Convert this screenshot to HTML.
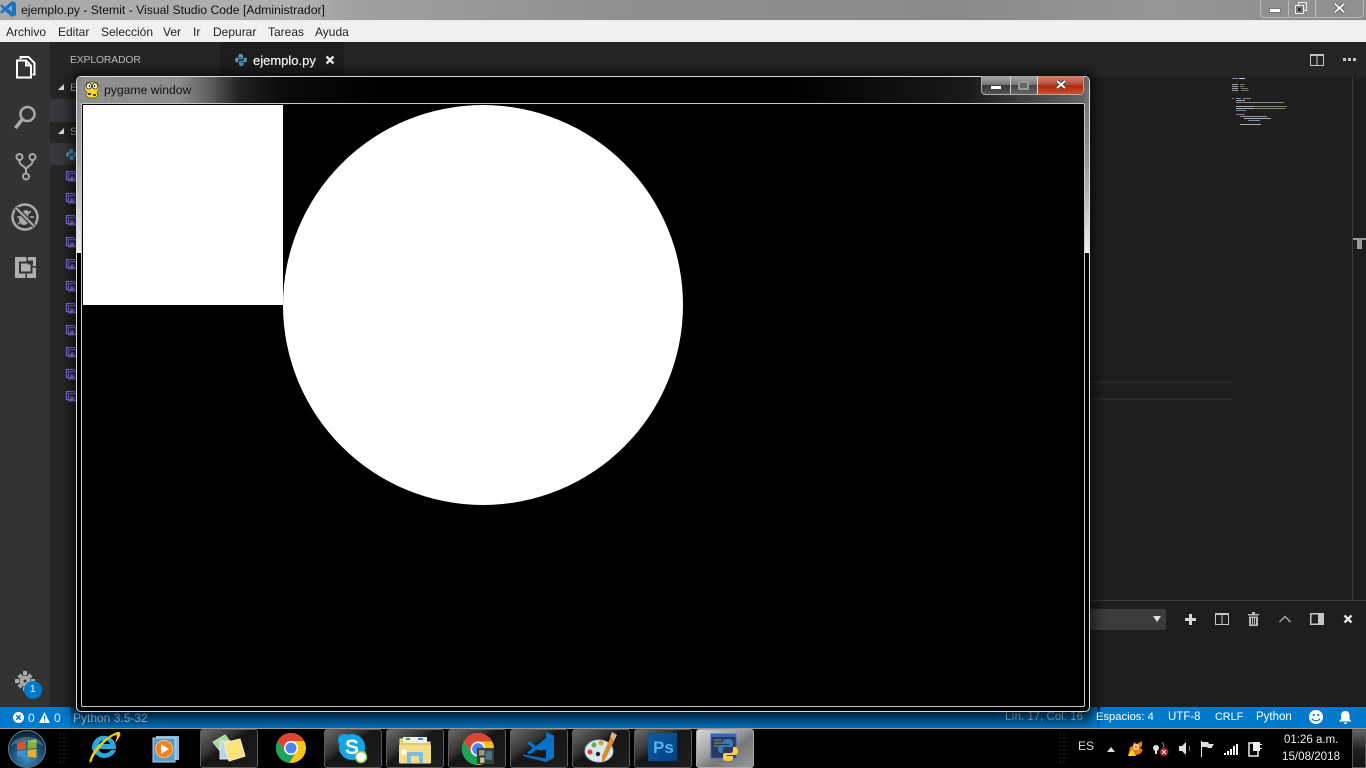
<!DOCTYPE html>
<html>
<head>
<meta charset="utf-8">
<style>
html,body{margin:0;padding:0;width:1366px;height:768px;overflow:hidden;background:#000;}
body{position:relative;font-family:"Liberation Sans",sans-serif;font-size:12px;}
.a{position:absolute;}
.t{position:absolute;white-space:nowrap;line-height:1;}
svg{position:absolute;overflow:visible;}
.btn{position:absolute;top:729px;width:56px;height:37px;border:1px solid #5a5a5a;border-radius:3px;background:linear-gradient(145deg,#6a6a6a 0%,#333 35%,#161616 45%,#1d1d1d 100%);}
.m{position:absolute;height:1px;}
.s{font-size:11.5px;top:712px;color:#fff;}
</style>
</head>
<body>
<!-- OS title bar -->
<div class="a" style="left:0;top:0;width:1366px;height:20px;background:linear-gradient(90deg,#a8a8a8 0,#b0b0b0 22%,#a0a0a0 26%,#8f8f8f 45%,#8a8a8a 70%,#969696 85%,#8a8a8a 100%);"></div>
<div class="a" style="left:0;top:20px;width:1366px;height:1px;background:#e8e8e8;"></div>
<svg style="left:0;top:0" width="18" height="18" viewBox="0 0 18 18"><path d="M12 1l4 2v12l-4 2-7-6-3 2.500-2-1 3-3.500-3-3.500 2-1 3 2.500zM12 5.500L8 8.500l4 3z" fill="#1b74c4"/></svg>
<div class="t" style="left:21px;top:4px;font-size:12.2px;color:#111;">ejemplo.py - Stemit - Visual Studio Code [Administrador]</div>
<!-- window buttons -->
<div class="a" style="left:1260px;top:0;width:102px;height:17px;border:1px solid #b8b8b8;border-top:none;border-radius:0 0 4px 4px;background:#909090;"></div>
<div class="a" style="left:1288px;top:0;width:1px;height:17px;background:#bbb;"></div>
<div class="a" style="left:1315px;top:0;width:1px;height:17px;background:#bbb;"></div>
<div class="a" style="left:1269px;top:8px;width:12px;height:5px;background:#fff;border:1px solid #777;box-sizing:border-box;"></div>
<svg style="left:1295px;top:2px" width="12" height="12"><rect x="3.500" y=".5" width="8" height="8" fill="none" stroke="#eee"/><rect x=".5" y="3.500" width="8" height="8" fill="#777" stroke="#eee"/><rect x="3" y="6" width="3" height="3" fill="#333"/></svg>
<svg style="left:1334px;top:3px" width="11" height="10"><path d="M1 1l9 8M10 1L1 9" stroke="#444" stroke-width="3.500"/><path d="M1 1l9 8M10 1L1 9" stroke="#fff" stroke-width="2"/></svg>
<!-- menu -->
<div class="a" style="left:0;top:21px;width:1366px;height:21px;background:#f0f0f0;"></div>
<div class="t" style="left:6px;top:26px;color:#222;">Archivo</div>
<div class="t" style="left:58px;top:26px;color:#222;">Editar</div>
<div class="t" style="left:101px;top:26px;color:#222;">Selección</div>
<div class="t" style="left:163px;top:26px;color:#222;">Ver</div>
<div class="t" style="left:193px;top:26px;color:#222;">Ir</div>
<div class="t" style="left:213px;top:26px;color:#222;">Depurar</div>
<div class="t" style="left:268px;top:26px;color:#222;">Tareas</div>
<div class="t" style="left:315px;top:26px;color:#222;">Ayuda</div>
<!-- VS code areas -->
<div class="a" style="left:0;top:42px;width:50px;height:665px;background:#333;"></div>
<div class="a" style="left:50px;top:42px;width:170px;height:665px;background:#252526;"></div>
<div class="a" style="left:220px;top:42px;width:1146px;height:35px;background:#252526;"></div>
<div class="a" style="left:220px;top:42px;width:124px;height:35px;background:#1e1e1e;"></div>
<div class="a" style="left:220px;top:77px;width:1146px;height:630px;background:#1e1e1e;"></div>
<div class="t" style="left:70px;top:56px;font-size:10.4px;letter-spacing:-.15px;color:#bbb;">EXPLORADOR</div>
<!-- tab -->
<svg style="left:235px;top:54px" width="12" height="12" viewBox="0 0 12 12"><path d="M6 0C3.500 0 3.500 1 3.500 2v1H6.500v.6H2C.8 3.600 0 4.500 0 6s.8 2.500 2 2.500h1V7c0-1 .8-1.800 1.800-1.800h2.700C7.500 5.200 8 4.700 8 4V2C8 .7 7 0 6 0z" fill="#519aba"/><path d="M6 12c2.500 0 2.500-1 2.500-2V9H5.500v-.6H10c1.200 0 2-.9 2-2.400s-.8-2.500-2-2.500H9V5c0 1-.8 1.800-1.800 1.800H4.500C4.500 6.800 4 7.300 4 8v2c0 1.300 1 2 2 2z" fill="#519aba"/></svg>
<div class="t" style="left:253px;top:54px;font-size:13px;color:#fff;text-shadow:0 0 .5px #fff;">ejemplo.py</div>
<svg style="left:326px;top:56px" width="8" height="8"><path d="M.5 .5l7 7M7.500 .5l-7 7" stroke="#e8e8e8" stroke-width="2.300"/></svg>
<!-- editor top-right -->
<svg style="left:1310px;top:54px" width="14" height="12"><rect x=".5" y=".5" width="13" height="11" fill="none" stroke="#c5c5c5"/><rect x="0" y="0" width="14" height="2" fill="#c5c5c5"/><rect x="6.500" y="0" width="1" height="12" fill="#c5c5c5"/></svg>
<div class="a" style="left:1343px;top:58px;width:3px;height:3px;background:#c5c5c5;"></div>
<div class="a" style="left:1348px;top:58px;width:3px;height:3px;background:#c5c5c5;"></div>
<div class="a" style="left:1353px;top:58px;width:3px;height:3px;background:#c5c5c5;"></div>
<!-- activity icons -->
<svg style="left:14px;top:54px" width="24" height="24" viewBox="0 0 24 24" fill="none" stroke="#fff" stroke-width="2"><path d="M6.500 5V3h8l6 6v11.500h-2"/><path d="M3 6.500h9l5 5v12H3z" fill="#333"/><path d="M12 6.500v5h5"/></svg>
<svg style="left:12px;top:104px" width="26" height="26" viewBox="0 0 26 26" fill="none" stroke="#a9a9a9"><circle cx="15.500" cy="10" r="7" stroke-width="2.500"/><path d="M10.500 15L3.500 24" stroke-width="3.500"/></svg>
<svg style="left:15px;top:153px" width="22" height="28" viewBox="0 0 22 28" fill="none" stroke="#a9a9a9" stroke-width="2"><circle cx="4.500" cy="4" r="3"/><circle cx="17.500" cy="4" r="3"/><circle cx="11" cy="23.500" r="3"/><path d="M4.500 7v2c0 3 6.500 5 6.500 7.500V20M17.500 7v2c0 3-6.500 5-6.500 7.500"/></svg>
<svg style="left:11px;top:203px" width="28" height="28" viewBox="0 0 28 28" fill="none" stroke="#a9a9a9"><circle cx="14" cy="14" r="12.500" stroke-width="2.500"/><ellipse cx="13" cy="16" rx="5" ry="6" fill="#a9a9a9" stroke="none"/><circle cx="15" cy="10" r="3" fill="#a9a9a9" stroke="none"/><path d="M9 8l3 3M20 8l-3 3M6 14h3M7 21l3-2M20 21l-2-2M23 14h-4" stroke-width="1.500"/><path d="M5 5l18 18" stroke="#333" stroke-width="4.500"/><path d="M5 5l18 18" stroke-width="2.200"/></svg>
<svg style="left:15px;top:257px" width="21" height="21" viewBox="0 0 21 21"><rect width="21" height="21" fill="#b0b0b0"/><rect x="5" y="5.500" width="11.500" height="10" fill="#b0b0b0" stroke="#333" stroke-width="2"/><rect x="11.500" y="0" width="1.500" height="5" fill="#333"/><rect x="17" y="9" width="4" height="1.500" fill="#333"/><rect x="10.500" y="16" width="1.500" height="5" fill="#333"/><rect x="0" y="17" width="10" height="0" fill="#333"/><rect x="13" y="3.500" width="5" height="4" fill="#333"/></svg>
<svg style="left:15px;top:671px" width="20" height="20" viewBox="0 0 20 20"><path d="M10 6.500a3.500 3.500 0 1 0 0 7 3.500 3.500 0 0 0 0-7z" fill="none" stroke="#a9a9a9" stroke-width="4"/><path d="M8 0h4v4H8zM8 16h4v4H8zM0 8h4v4H0zM16 8h4v4h-4zM2.500 5.500l3-3 2 2-3 3zM14.500 17.500l3-3-2-2-3 3zM2.500 14.500l3 3 2-2-3-3zM14.500 2.500l3 3-2 2-3-3z" fill="#a9a9a9"/></svg>
<div class="a" style="left:24px;top:681px;width:18px;height:18px;border-radius:50%;background:#007acc;"></div>
<div class="t" style="left:30px;top:685px;font-size:10px;color:#fff;">1</div>
<!-- sidebar -->
<div class="a" style="left:50px;top:99px;width:170px;height:23px;background:#37373d;"></div>
<div class="a" style="left:50px;top:143px;width:170px;height:22px;background:#37373d;"></div>
<svg style="left:58px;top:84px" width="6" height="6"><path d="M6 0v6H0z" fill="#ddd"/></svg>
<svg style="left:58px;top:128px" width="6" height="6"><path d="M6 0v6H0z" fill="#ddd"/></svg>
<div class="t" style="left:70px;top:83px;font-size:11px;color:#bbb;">E</div>
<div class="t" style="left:70px;top:127px;font-size:11px;color:#bbb;">S</div>
<svg style="left:66px;top:149px" width="11" height="11" viewBox="0 0 12 12"><path d="M6 0C3.500 0 3.500 1 3.500 2v1H6.500v.6H2C.8 3.600 0 4.500 0 6s.8 2.500 2 2.500h1V7c0-1 .8-1.800 1.800-1.800h2.700C7.500 5.200 8 4.700 8 4V2C8 .7 7 0 6 0z" fill="#4e9cc0"/><path d="M6 12c2.500 0 2.500-1 2.500-2V9H5.500v-.6H10c1.200 0 2-.9 2-2.400s-.8-2.500-2-2.500H9V5c0 1-.8 1.800-1.800 1.800H4.500C4.500 6.800 4 7.300 4 8v2c0 1.300 1 2 2 2z" fill="#4e9cc0"/></svg>
<svg style="left:65px;top:171px" width="11" height="236">
<defs><g id="im"><rect x="1.500" y=".5" width="8" height="8" fill="none" stroke="#8478e0" stroke-width="1.200"/><rect x="3.500" y="2.500" width="7.500" height="7.500" fill="#39365c" stroke="#8478e0" stroke-width=".8"/><path d="M3.500 10l3.500-5 4 5z" fill="#a878e8"/></g></defs>
<use href="#im" y="0"/><use href="#im" y="22"/><use href="#im" y="44"/><use href="#im" y="66"/><use href="#im" y="88"/><use href="#im" y="110"/><use href="#im" y="132"/><use href="#im" y="154"/><use href="#im" y="176"/><use href="#im" y="198"/><use href="#im" y="220"/>
</svg>
<!-- editor right details: minimap -->
<div class="m" style="left:1232px;top:78px;width:6px;background:#a070b0;"></div>
<div class="m" style="left:1239px;top:78px;width:6px;background:#ccc;"></div>
<div class="m" style="left:1232px;top:84px;width:6px;background:#999;"></div>
<div class="m" style="left:1240px;top:84px;width:5px;background:#6a7a5c;"></div>
<div class="m" style="left:1232px;top:86px;width:6px;background:#999;"></div>
<div class="m" style="left:1240px;top:86px;width:4px;background:#6a7a5c;"></div>
<div class="m" style="left:1232px;top:88px;width:6px;background:#999;"></div>
<div class="m" style="left:1241px;top:88px;width:7px;background:#6a7a5c;"></div>
<div class="m" style="left:1232px;top:90px;width:6px;background:#999;"></div>
<div class="m" style="left:1241px;top:90px;width:8px;background:#6a7a5c;"></div>
<div class="m" style="left:1232px;top:98px;width:2px;background:#a070b0;"></div>
<div class="m" style="left:1236px;top:98px;width:5px;background:#5a9ac0;"></div>
<div class="m" style="left:1243px;top:98px;width:8px;background:#a07860;"></div>
<div class="m" style="left:1236px;top:100px;width:9px;background:#aaa;"></div>
<div class="m" style="left:1236px;top:102px;width:48px;background:#888;"></div>
<div class="m" style="left:1236px;top:106px;width:18px;background:#aaa;"></div>
<div class="m" style="left:1254px;top:106px;width:33px;background:#7c8a70;"></div>
<div class="m" style="left:1236px;top:108px;width:18px;background:#aaa;"></div>
<div class="m" style="left:1254px;top:108px;width:31px;background:#7c8a70;"></div>
<div class="m" style="left:1236px;top:110px;width:10px;background:#6a8ab0;"></div>
<div class="m" style="left:1236px;top:114px;width:9px;background:#a070b0;"></div>
<div class="m" style="left:1240px;top:116px;width:27px;background:#999;"></div>
<div class="m" style="left:1244px;top:118px;width:27px;background:#aaa;"></div>
<div class="m" style="left:1248px;top:120px;width:12px;background:#6a8ab0;"></div>
<div class="m" style="left:1240px;top:124px;width:21px;background:#aaa;"></div>
<div class="a" style="left:1352px;top:77px;width:1px;height:523px;background:#3c3c3c;"></div>
<div class="a" style="left:1353px;top:238px;width:13px;height:2px;background:#999;"></div>
<div class="a" style="left:1357px;top:240px;width:5px;height:9px;background:#999;"></div>
<div class="a" style="left:1090px;top:381px;width:142px;height:2px;background:#2a2a2a;"></div>
<div class="a" style="left:1090px;top:398px;width:142px;height:2px;background:#2a2a2a;"></div>
<!-- panel -->
<div class="a" style="left:1090px;top:600px;width:276px;height:1px;background:#3c3c3c;"></div>
<div class="a" style="left:1090px;top:609px;width:76px;height:21px;background:#3c3c3c;"></div>
<svg style="left:1153px;top:616px" width="8" height="6"><path d="M0 0h8L4 6z" fill="#e0e0e0"/></svg>
<svg style="left:1185px;top:614px" width="11" height="11"><path d="M4 0h3v4h4v3H7v4H4V7H0V4h4z" fill="#d7d7d7"/></svg>
<svg style="left:1215px;top:613px" width="14" height="12"><rect x=".5" y=".5" width="13" height="11" fill="none" stroke="#c5c5c5"/><rect x="0" y="0" width="14" height="2" fill="#c5c5c5"/><rect x="6.500" y="0" width="1" height="12" fill="#c5c5c5"/></svg>
<svg style="left:1248px;top:612px" width="11" height="14"><path d="M0 2h11v1.500H0zM4 0h3v2H4zM1 4.500h9V14H1z" fill="#b8b8b8"/><path d="M3.500 6v6.500M5.500 6v6.500M7.500 6v6.500" stroke="#252526"/></svg>
<svg style="left:1279px;top:615px" width="12" height="8" fill="none"><path d="M.5 7L6 1.500 11.500 7" stroke="#a8a8a8" stroke-width="1.500"/></svg>
<svg style="left:1310px;top:613px" width="14" height="12"><rect x=".75" y=".75" width="12.500" height="10.500" fill="none" stroke="#c5c5c5" stroke-width="1.500"/><rect x="8" y="0" width="6" height="12" fill="#c5c5c5"/></svg>
<svg style="left:1344px;top:615px" width="8" height="8"><path d="M.5 .5l7 7M7.500 .5l-7 7" stroke="#e8e8e8" stroke-width="2.300"/></svg>
<!-- status bar -->
<div class="a" style="left:0;top:707px;width:1366px;height:21px;background:#007acc;"></div>
<div class="a" style="left:70px;top:707px;width:1030px;height:21px;background:linear-gradient(180deg,#002a4a 0%,#004a80 35%,#006fb8 100%);"></div>
<div class="a" style="left:60px;top:707px;width:20px;height:21px;background:linear-gradient(90deg,rgba(0,122,204,1),rgba(0,122,204,0));"></div>
<div class="a" style="left:1085px;top:707px;width:12px;height:21px;background:linear-gradient(90deg,rgba(0,122,204,0),rgba(0,122,204,1));"></div>
<svg style="left:13px;top:712px" width="11" height="11"><circle cx="5.500" cy="5.500" r="5.500" fill="#fff"/><path d="M3.300 3.300l4.400 4.400M7.700 3.300L3.300 7.700" stroke="#007acc" stroke-width="1.500"/></svg>
<div class="t" style="left:28px;top:712px;color:#e8f2fa;">0</div>
<svg style="left:39px;top:712px" width="11" height="11"><path d="M5.500 0L11 11H0z" fill="#fff"/><rect x="5" y="3.500" width="1.200" height="4" fill="#007acc"/><rect x="5" y="8.500" width="1.200" height="1.200" fill="#007acc"/></svg>
<div class="t" style="left:54px;top:712px;color:#e8f2fa;">0</div>
<div class="t" style="left:73px;top:712px;color:#a8c4d8;">Python 3.5-32</div>
<div class="t s" style="left:1005px;color:#8cb4d0;">Lín. 17, Col. 16</div>
<div class="t s" style="left:1096px;font-size:11.2px;">Espacios: 4</div>
<div class="t s" style="left:1168px;">UTF-8</div>
<div class="t s" style="left:1215px;font-size:10.8px;">CRLF</div>
<div class="t s" style="left:1256px;">Python</div>
<svg style="left:1309px;top:710px" width="14" height="14"><circle cx="7" cy="7" r="7" fill="#fff"/><circle cx="4.700" cy="5" r="1.100" fill="#007acc"/><circle cx="9.300" cy="5" r="1.100" fill="#007acc"/><path d="M3 8.500c1.500 3 6.500 3 8 0" fill="none" stroke="#007acc" stroke-width="1.200"/></svg>
<svg style="left:1339px;top:711px" width="13" height="14"><path d="M6.500 0c3 0 4 2.500 4 5v3l2 2.500H0L2 8V5c0-2.500 1-5 4.500-5zM4.800 11.500h3.400c0 2-3.400 2-3.400 0z" fill="#fff"/></svg>
<!-- taskbar -->
<div class="a" style="left:0;top:728px;width:1366px;height:40px;background:#000;"></div>
<div class="a" style="left:0;top:728px;width:1366px;height:1px;background:#9a9a9a;"></div>
<!-- start -->
<svg style="left:8px;top:730px" width="38" height="38" viewBox="0 0 38 38"><defs><radialGradient id="s" cx="50%" cy="75%" r="70%"><stop offset="0" stop-color="#3f8ec0"/><stop offset=".6" stop-color="#1a5078"/><stop offset="1" stop-color="#0a2238"/></radialGradient></defs><circle cx="19" cy="19" r="18.500" fill="url(#s)" stroke="#6a7a88"/><path d="M9 13l9-2v8l-9 1z" fill="#d8562c"/><path d="M19.500 11l9-2v9l-9 1z" fill="#80b438"/><path d="M9 21l9-1v8l-9-2z" fill="#3c8fd8"/><path d="M19.500 20l9-1v9l-9-1.500z" fill="#e8b02c"/><path d="M3 16C5 4 33 4 35 16 25 10 13 10 3 16z" fill="#fff" opacity=".22"/></svg>
<div class="a" style="left:58px;top:732px;width:8px;height:32px;background-image:radial-gradient(#444 .6px,transparent .8px);background-size:4px 4px;"></div>
<!-- IE -->
<svg style="left:89px;top:731px" width="32" height="33" viewBox="0 0 32 33"><path d="M3 16a12 12 0 0 1 23-4c1 3 1 4 1 6H10c.5 5 8 6 12 1h5c-3 8-13 10-18 6-4-3-6-5-6-9zM10 13h11c-1-5-10-5-11 0z" fill="#2ba7e0"/><path d="M1 32C-2 28 10 8 28 1c3-1 4 1 3 4-1 2-3 5-5 7 1-3 3-8 1-8C17 7 4 24 3 30z" fill="#f5c518"/></svg>
<!-- WMP -->
<svg style="left:153px;top:736px" width="26" height="26" viewBox="0 0 26 26"><rect x="3" y="0" width="23" height="24" fill="#8ab8d8"/><rect x="0" y="2" width="22" height="24" fill="#5c9ac8" stroke="#b8d8ec"/><circle cx="11" cy="13" r="8.500" fill="#f08020" stroke="#f8c088"/><path d="M8 8l8 5-8 5z" fill="#fff"/></svg>
<!-- sticky -->
<div class="btn" style="left:200px;"></div>
<svg style="left:212px;top:734px" width="34" height="28" viewBox="0 0 34 28"><path d="M1 8l12-7 7 9-11 8z" fill="#a4d88c" stroke="#cfeabd"/><rect x="8" y="7" width="16" height="18" fill="#b8d4f0" stroke="#e0ecf8"/><path d="M12 9l16-4 5 17-16 5z" fill="#f8e27c" stroke="#fff3b8"/></svg>
<!-- chrome -->
<svg style="left:276px;top:733px" width="30" height="30" viewBox="0 0 30 30"><circle cx="15" cy="15" r="15" fill="#f8c51c"/><path d="M15 0A15 15 0 0 0 2 7.500L8.500 18.800 15 8h13A15 15 0 0 0 15 0z" fill="#de4535"/><path d="M2 7.500A15 15 0 0 0 13.500 30l6.500-11.200-11.500 0z" fill="#1fa25a"/><circle cx="15" cy="15" r="7" fill="#fff"/><circle cx="15" cy="15" r="5.500" fill="#4d86f0"/></svg>
<!-- skype -->
<div class="btn" style="left:324px;"></div>
<svg style="left:337px;top:733px" width="32" height="32" viewBox="0 0 32 32"><circle cx="15" cy="14" r="13" fill="#11a7e8"/><circle cx="7" cy="7" r="6" fill="#11a7e8"/><circle cx="23" cy="21" r="6" fill="#11a7e8"/><text x="15" y="21" font-family="Liberation Sans" font-weight="bold" font-size="21" fill="#fff" text-anchor="middle">S</text><circle cx="24" cy="24" r="5.500" fill="#fff" stroke="#8cc63f" stroke-width="1.500"/></svg>
<!-- explorer -->
<div class="btn" style="left:386px;"></div>
<svg style="left:398px;top:735px" width="34" height="28" viewBox="0 0 34 28"><path d="M2 4h12l2 3h16v21H2z" fill="#e8c860" stroke="#f8e8a8"/><rect x="5" y="2" width="24" height="6" fill="#f0f0e0"/><rect x="8" y="3" width="4" height="2" fill="#3a3"/><rect x="20" y="3" width="5" height="2" fill="#38c"/><path d="M1 10h32v18H1z" fill="#f4dc88"/><path d="M9 17h16v11h-4v-7H13v7H9z" fill="#7cbce0"/><circle cx="6" cy="17" r="3" fill="#fff" opacity=".8"/></svg>
<!-- chrome 2 -->
<div class="btn" style="left:448px;"></div>
<svg style="left:462px;top:733px" width="32" height="32" viewBox="0 0 30 30"><circle cx="15" cy="15" r="15" fill="#f8c51c"/><path d="M15 0A15 15 0 0 0 2 7.500L8.500 18.800 15 8h13A15 15 0 0 0 15 0z" fill="#de4535"/><path d="M2 7.500A15 15 0 0 0 13.500 30l6.500-11.200-11.500 0z" fill="#1fa25a"/><circle cx="15" cy="15" r="7" fill="#fff"/><circle cx="15" cy="15" r="5.500" fill="#4d86f0"/><rect x="14" y="14" width="16" height="15" fill="#39403a"/><rect x="16" y="16" width="5" height="5" fill="#a89878"/><rect x="22" y="17" width="6" height="8" fill="#4a7a8a"/><rect x="17" y="23" width="4" height="5" fill="#c8c0a0"/></svg>
<!-- vscode -->
<div class="btn" style="left:510px;"></div>
<svg style="left:522px;top:731px" width="33" height="33" viewBox="0 0 33 33"><path d="M24 1l8 3.500V27l-8 4L1 25l0-1.500 23 4V1zM24 7L14 15l-6-4.500-3 1.500 5.500 5L5 22l3 1.500 6-4.500 10 0z" fill="#0a70c8"/><path d="M14 15l6-3v8l-6-3z" fill="#0a70c8"/></svg>
<!-- paint -->
<div class="btn" style="left:572px;"></div>
<svg style="left:585px;top:732px" width="32" height="32" viewBox="0 0 32 32"><ellipse cx="14" cy="19" rx="14" ry="11" fill="#d8e6ee" stroke="#a8c4d4"/><circle cx="5" cy="20" r="2.500" fill="#d84030"/><circle cx="9" cy="13" r="2.500" fill="#60b040"/><circle cx="16" cy="11" r="2.500" fill="#e0a030"/><circle cx="13" cy="22" r="2.200" fill="#222"/><path d="M27 2l4 3-10 21-4 5 0-7z" fill="#e08a30"/><path d="M27 0l5 3-3 5-4-3z" fill="#d8b890"/></svg>
<!-- ps -->
<div class="btn" style="left:634px;"></div>
<div class="a" style="left:648px;top:733px;width:29px;height:28px;background:linear-gradient(135deg,#0d5aa0,#064080);box-shadow:1px 1px 0 #02204a;"></div>
<div class="t" style="left:653px;top:739px;font-size:17px;font-weight:bold;color:#4cb8e8;">Ps</div>
<!-- python active -->
<div class="btn" style="left:696px;border-color:#aaa;background:linear-gradient(145deg,#d8d8d8 0%,#a0a0a0 40%,#787878 60%,#989898 100%);"></div>
<svg style="left:711px;top:733px" width="30" height="30" viewBox="0 0 30 30"><rect x="0" y="1" width="25" height="24" fill="#2a3a58" stroke="#3060c8"/><rect x="0" y="1" width="25" height="3" fill="#3068c8"/><path d="M3 7h8M3 10h12M3 13h6" stroke="#8a8a8a"/><path d="M17 6c-4 0-5 1-5 3v2h6v1H10c-2 0-3 2-3 4s1 4 3 4h2v-3c0-2 1-3 3-3h5c1 0 2-1 2-2V9c0-2-2-3-5-3z" fill="#3a78b0"/><path d="M17 28c4 0 5-1 5-3v-2h-6v-1h8c2 0 3-2 3-4s-1-4-3-4h-2v3c0 2-1 3-3 3h-5c-1 0-2 1-2 2v3c0 2 2 3 5 3z" fill="#f8d040"/></svg>
<!-- tray -->
<div class="a" style="left:1058px;top:732px;width:8px;height:32px;background-image:radial-gradient(#444 .6px,transparent .8px);background-size:4px 4px;"></div>
<div class="t" style="left:1078px;top:740px;color:#ddd;">ES</div>
<svg style="left:1107px;top:747px" width="8" height="5"><path d="M0 5l4-5 4 5z" fill="#ddd"/></svg>
<svg style="left:1127px;top:740px" width="17" height="17" viewBox="0 0 17 17"><path d="M1 16L3 7l3-1 1-4 3 2 5-3v5l-2 2 3 2-3 4-4 1z" fill="#e87810"/><rect x="7" y="5" width="4" height="4" fill="none" stroke="#fff"/><path d="M1 16L5 9l4 7z" fill="#f8d020"/></svg>
<svg style="left:1152px;top:741px" width="18" height="16" viewBox="0 0 18 16"><circle cx="4" cy="7" r="3" fill="#ddd"/><rect x="3" y="9" width="2" height="4" fill="#ddd"/><path d="M10 1c2 2 2 4 2 6" stroke="#888" fill="none"/><circle cx="12" cy="11" r="4.500" fill="#a82020"/><path d="M10 9l4 4M14 9l-4 4" stroke="#fff"/></svg>
<svg style="left:1179px;top:741px" width="14" height="15"><path d="M0 5h3l4-4v13l-4-4H0z" fill="#ddd"/><path d="M10 5c1 2 1 3 0 5" stroke="#888" fill="none"/></svg>
<svg style="left:1200px;top:741px" width="16" height="16"><rect x="1" y="0" width="1" height="16" fill="#eee"/><path d="M2 1h6l1 2h5l-2 3 0 1H8L7 6H2z" fill="#ddd"/></svg>
<svg style="left:1224px;top:744px" width="15" height="11"><rect x="0" y="9" width="2" height="2" fill="#fff"/><rect x="3" y="7" width="2" height="4" fill="#fff"/><rect x="6" y="5" width="2" height="6" fill="#fff"/><rect x="9" y="2" width="2" height="9" fill="#eee"/><rect x="12" y="0" width="2" height="11" fill="#eee"/></svg>
<svg style="left:1248px;top:741px" width="15" height="16"><rect x="1" y="2" width="9" height="13" fill="none" stroke="#eee" stroke-width="1.500"/><path d="M5 1h7v2h2v1h-2v3h2v1h-2v2H5z" fill="#eee"/></svg>
<div class="t" style="left:1284px;top:735px;font-size:11.500px;color:#eee;">01:26 a.m.</div>
<div class="t" style="left:1282px;top:751px;font-size:11.600px;color:#eee;">15/08/2018</div>
<div class="a" style="left:1352px;top:729px;width:12px;height:37px;border:1px solid #555;background:linear-gradient(180deg,#666,#222 50%,#111);"></div>
<!-- Pygame window -->
<div class="a" style="left:76px;top:76px;width:1014px;height:636px;box-sizing:border-box;border:1px solid #ddd;border-radius:5px;background:#000;box-shadow:0 0 12px 5px rgba(0,0,0,.6);overflow:hidden;">
<div class="a" style="left:0;top:0;width:1014px;height:28px;background:linear-gradient(90deg,#909090 0,#8c8c8c 10%,#606060 13%,#222 16%,#0c0c0c 20%,#000 30%,#000 70%,#1a1a1a 88%,#4a4a4a 95%,#6a6a6a 100%);"></div>
<div class="a" style="left:0;top:0;width:5px;height:176px;background:linear-gradient(180deg,#888,#a8a8a8 50%,#f0f0f0 100%);"></div>
<div class="a" style="left:1008px;top:0;width:5px;height:176px;background:linear-gradient(180deg,#666,#999 50%,#f0f0f0 100%);"></div>
</div>
<div class="a" style="left:81px;top:103px;width:1004px;height:604px;box-sizing:border-box;border:1px solid #c8c8c8;border-radius:2px;background:#000;"></div>
<svg style="left:84px;top:81px" width="16" height="17" viewBox="0 0 16 17"><path d="M2 3C4 0 12 0 14 3c2 3 1 6-1 8l1 4-3 2H5l-3-2 1-4C0 9 0 6 2 3z" fill="#f2d92a" stroke="#5a5020" stroke-width=".7"/><ellipse cx="5" cy="5" rx="2.600" ry="3" fill="#fff" stroke="#222" stroke-width=".8"/><ellipse cx="11" cy="5" rx="2.600" ry="3" fill="#fff" stroke="#222" stroke-width=".8"/><circle cx="5.500" cy="5" r=".9" fill="#111"/><circle cx="10.500" cy="5" r=".9" fill="#111"/><path d="M4 12h3v2H4zM9 13h3v2H9z" fill="#444"/></svg>
<div class="t" style="left:104px;top:84px;font-size:12.200px;color:#111;">pygame window</div>
<!-- pygame buttons -->
<div class="a" style="left:981px;top:76px;width:103px;height:19px;box-sizing:border-box;border:1px solid #aaa;border-top:none;border-radius:0 0 4px 4px;overflow:hidden;background:#555;">
<div class="a" style="left:0;top:0;width:28px;height:18px;background:linear-gradient(180deg,#a8a8a8,#777 48%,#333 52%,#555);"></div>
<div class="a" style="left:28px;top:0;width:27px;height:18px;background:linear-gradient(180deg,#a8a8a8,#777 48%,#444 52%,#666);border-left:1px solid #ccc;box-sizing:border-box;"></div>
<div class="a" style="left:55px;top:0;width:47px;height:18px;background:linear-gradient(180deg,#d88070,#b85040 45%,#b02808 55%,#c85030);border-left:1px solid #ddd;box-sizing:border-box;"></div>
</div>
<div class="a" style="left:991px;top:86px;width:10px;height:3px;background:#fff;"></div>
<div class="a" style="left:1018px;top:81px;width:11px;height:9px;box-sizing:border-box;border:2px solid #999;background:#666;"></div>
<svg style="left:1056px;top:80px" width="10" height="9"><path d="M1 1l8 7M9 1L1 8" stroke="#333" stroke-width="3.500"/><path d="M1 1l8 7M9 1L1 8" stroke="#fff" stroke-width="2"/></svg>
<!-- pygame content -->
<div class="a" style="left:83px;top:105px;width:200px;height:200px;background:#fff;"></div>
<div class="a" style="left:283px;top:105px;width:400px;height:400px;border-radius:50%;background:#fff;"></div>
</body>
</html>
